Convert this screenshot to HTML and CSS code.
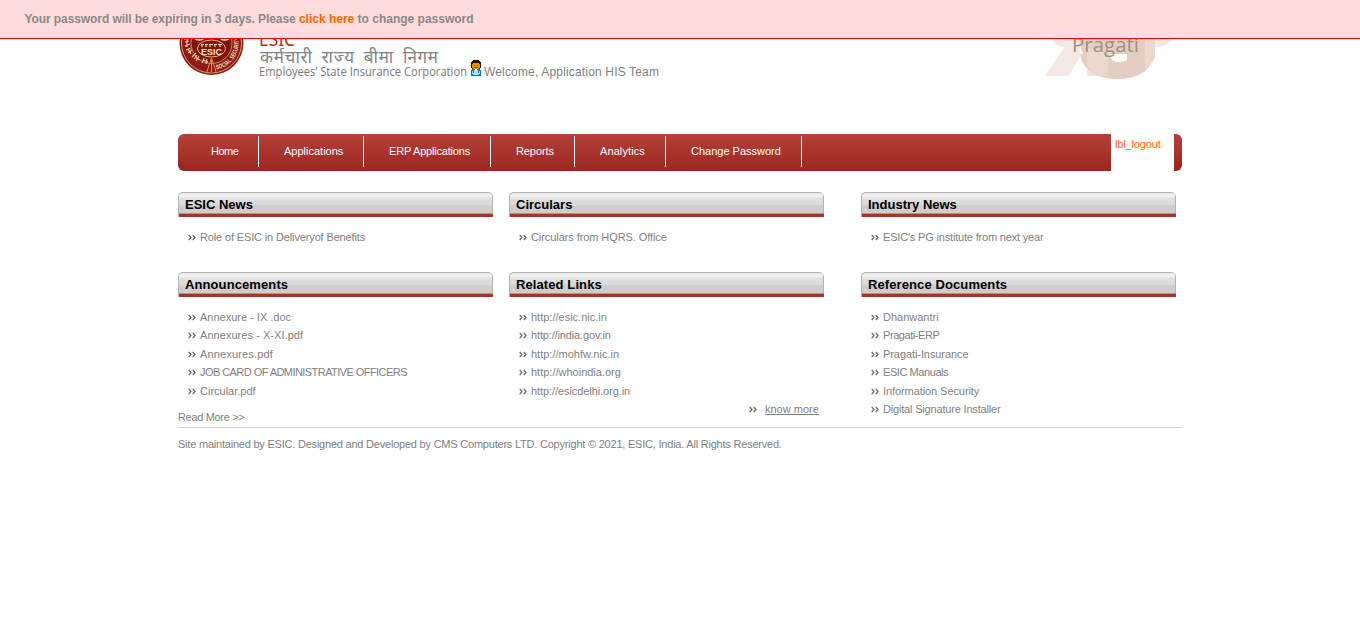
FILE: index.html
```html
<!DOCTYPE html>
<html lang="en">
<head>
<meta charset="utf-8">
<title>ESIC</title>
<link rel="stylesheet" href="styles.css">
</head>
<body>
<svg class="defs" width="0" height="0">
  <symbol id="arrows" viewBox="0 0 8 7"><path d="M0.7 0.8l2.3 2.7-2.3 2.7M4.7 0.8l2.3 2.7-2.3 2.7" fill="none" stroke="#666" stroke-width="1.3"/></symbol>
</svg>
<div class="notice"><span class="lead">Your password will be expiring in 3 days. Please </span><a class="hot" href="#">click here</a> to change password</div>
<div class="page">
  <header class="header">
    <svg class="seal" width="66" height="66" viewBox="0 0 66 66">
      <circle cx="32.5" cy="33" r="32" fill="#8d1a17"/>
      <circle cx="32.5" cy="33" r="30" fill="none" stroke="#d9a05a" stroke-width="1"/>
      <circle cx="32.5" cy="33" r="20.5" fill="#7c1512" stroke="#c88c4c" stroke-width="1"/>
      <path d="M15 29q4 3 9 1 4-4 9-4t9 4q5 2 9-1l-3-6H18z" fill="#fdf3c0"/>
      <ellipse cx="32.5" cy="38.5" rx="14" ry="8.5" fill="#84140f" stroke="#e4b877" stroke-width="1"/>
      <path d="M22 34.5h3m1 0h3m1 0h4m1 0h3m1 0h4M23 34v3m4-3v3m4-3v3m5-3v3m5-3v3" stroke="#f3d9b0" stroke-width="1.2"/>
      <text class="seal-name" x="22" y="45" textLength="21" lengthAdjust="spacingAndGlyphs">ESIC</text>
      <path d="M32.5 48l-5 15M32.5 48l5 15M32.5 50v12" stroke="#d99645" stroke-width="1" fill="none"/>
      <path id="arc" d="M37.5 59.5A27 27 0 0 0 59 27" fill="none"/>
      <text class="seal-ring"><textPath href="#arc" textLength="43" lengthAdjust="spacingAndGlyphs">SOCIAL SECURITY</textPath></text>
      <path d="M5 29h5m-4 3l4-1m-4 5l5-2m-3-4v7m-1 3l5-2m-3 5l4-3m-4-1l3 5m1 3l4-4m-2 6l3-4m-1 6l3-5m-4 1l5 3m2 3l2-5m2 6l1-5m-4 1l5 2" fill="none" stroke="#f1d0a8" stroke-width="1.1"/>
    </svg>
    <svg class="brand" width="212" height="58" viewBox="0 0 212 58">
      <text class="brand-short" x="1" y="22" textLength="36" lengthAdjust="spacingAndGlyphs">ESIC</text>
      <text class="brand-hindi" x="2" y="39" textLength="178" lengthAdjust="spacing">कर्मचारी राज्य बीमा निगम</text>
      <text class="brand-full" x="1" y="52" textLength="208" lengthAdjust="spacingAndGlyphs">Employees’ State Insurance Corporation</text>
    </svg>
    <svg class="user" width="10" height="16" viewBox="0 0 10 16" shape-rendering="crispEdges">
      <path d="M2 0h6v1h1v1h1v6H9v1H1V8H0V2h1V1h1z" fill="#21140a"/>
      <path d="M1 4h1V3h6v1h1v4H8v1H2V8H1z" fill="#d99a0e"/>
      <path d="M3 5h1v1H3zm3 0h1v1H6zM3 7h4v1H3z" fill="#8c5a05"/>
      <path d="M1 9h8v1h1v6H0v-6h1z" fill="#0872d2"/>
      <path d="M1 11h1v3H1zm7 0h1v3H8zM3 10h4v3H3zM2 13h6v2H2z" fill="#a8e2ff"/>
      <path d="M4 9h2v2H4z" fill="#fff"/>
    </svg>
    <span class="welcome">Welcome, Application HIS Team</span>
    <svg class="pragati" width="134" height="50" viewBox="0 0 134 50">
      <path d="M6 0h30v27L26 44q-1 2-3 2H2q-1 0 0-2l19-27Q11 18 7 8z" fill="#f3e8e4"/>
      <path d="M43 20h22v26H45q-2 0-2-2z" fill="#f0e2dc"/>
      <path d="M101 0h32q-2 14-19 17l-3 0v10H101z" fill="#f3e8e4"/>
      <path d="M34 0h67v20H83V0v17q3 12-8 14-9-1-10-8-20-2-24 5-5-8-7-28z" fill="#e4cec2"/>
      <path d="M36 24q2 14 16 21 10 4 22 4 27 0 35-19H83q-3 2-9 2-7-1-9-8z" fill="#e4cec2"/>
      <path d="M43 19h21v27H54q-9-5-11-11z" fill="#ead8ce"/>
      <path d="M101 8h10v20l-10 13z" fill="#ead8ce"/>
      <path d="M83 17h18v14H83z" fill="#e4cec2"/>
      <path d="M66 24h17v3q-3 5-9 5t-8-8z" fill="#fff"/>
      <text class="pragati-name" x="28" y="21.5" textLength="67" lengthAdjust="spacingAndGlyphs">Pragati</text>
    </svg>
  </header>
  <nav class="nav">
    <a class="tab home" href="#">Home</a><a class="tab apps" href="#">Applications</a><a class="tab erp" href="#">ERP Applications</a><a class="tab reports" href="#">Reports</a><a class="tab analytics" href="#">Analytics</a><a class="tab change" href="#">Change Password</a>
    <div class="logout"><a href="#">lbl_logout</a></div>
  </nav>
  <main class="grid">
    <section class="panel">
      <h2 class="title">ESIC News</h2>
      <ul class="list">
        <li><svg class="arr"><use href="#arrows"/></svg><a class="t2">Role of ESIC in Deliveryof Benefits</a></li>
      </ul>
    </section>
    <section class="panel">
      <h2 class="title">Circulars</h2>
      <ul class="list">
        <li><svg class="arr"><use href="#arrows"/></svg><a class="t1">Circulars from HQRS. Office</a></li>
      </ul>
    </section>
    <section class="panel">
      <h2 class="title">Industry News</h2>
      <ul class="list">
        <li><svg class="arr"><use href="#arrows"/></svg><a class="t3">ESIC's PG institute from next year</a></li>
      </ul>
    </section>
    <section class="panel">
      <h2 class="title wide">Announcements</h2>
      <ul class="list">
        <li><svg class="arr"><use href="#arrows"/></svg><a>Annexure - IX .doc</a></li>
        <li><svg class="arr"><use href="#arrows"/></svg><a class="w1">Annexures - X-XI.pdf</a></li>
        <li><svg class="arr"><use href="#arrows"/></svg><a class="w2">Annexures.pdf</a></li>
        <li><svg class="arr"><use href="#arrows"/></svg><a class="t5">JOB CARD OF ADMINISTRATIVE OFFICERS</a></li>
        <li><svg class="arr"><use href="#arrows"/></svg><a>Circular.pdf</a></li>
      </ul>
      <a class="read">Read More &gt;&gt;</a>
    </section>
    <section class="panel">
      <h2 class="title wide">Related Links</h2>
      <ul class="list">
        <li><svg class="arr"><use href="#arrows"/></svg><a>http://esic.nic.in</a></li>
        <li><svg class="arr"><use href="#arrows"/></svg><a class="t2">http://india.gov.in</a></li>
        <li><svg class="arr"><use href="#arrows"/></svg><a>http://mohfw.nic.in</a></li>
        <li><svg class="arr"><use href="#arrows"/></svg><a>http://whoindia.org</a></li>
        <li><svg class="arr"><use href="#arrows"/></svg><a class="t1">http://esicdelhi.org.in</a></li>
        <li class="more"><svg class="arr"><use href="#arrows"/></svg><a>know more</a></li>
      </ul>
    </section>
    <section class="panel">
      <h2 class="title wide">Reference Documents</h2>
      <ul class="list">
        <li><svg class="arr"><use href="#arrows"/></svg><a>Dhanwantri</a></li>
        <li><svg class="arr"><use href="#arrows"/></svg><a class="t4">Pragati-ERP</a></li>
        <li><svg class="arr"><use href="#arrows"/></svg><a class="t1">Pragati-Insurance</a></li>
        <li><svg class="arr"><use href="#arrows"/></svg><a class="t4">ESIC Manuals</a></li>
        <li><svg class="arr"><use href="#arrows"/></svg><a class="t1">Information Security</a></li>
        <li><svg class="arr"><use href="#arrows"/></svg><a class="t3">Digital Signature Installer</a></li>
      </ul>
    </section>
  </main>
  <footer class="footer">Site maintained by ESIC. Designed and Developed by CMS Computers LTD. Copyright © 2021, ESIC, India. All Rights Reserved.</footer>
</div>
</body>
</html>
```
FILE: styles.css
```css
* { box-sizing: border-box; }
body {
  margin: 0;
  background: #fff;
  color: #808080;
  font: 11px/14px "Liberation Sans", Arial, sans-serif;
}
a { color: inherit; text-decoration: none; }
.defs { display: block; }
.notice {
  position: fixed;
  inset: 0 0 auto;
  z-index: 5;
  height: 39px;
  padding: 0 24.5px;
  background: #ffdcdc;
  border-bottom: 1px solid #f00;
  color: #888;
  font-size: 12px;
  font-weight: bold;
  line-height: 38px;
}
.notice .lead { letter-spacing: -0.085px; }
.notice .hot { color: #f60; }
.page { width: 1004px; margin: 0 auto; }
.header {
  display: flex;
  align-items: flex-start;
  height: 134px;
}
.seal { margin: 10px 0 0 1px; flex: none; }
.brand { margin: 24px 0 0 13px; flex: none; overflow: visible; }
.seal-name { font: bold 8.5px "Liberation Sans", sans-serif; fill: #f8e3bd; }
.seal-ring { font: bold 6.5px "Liberation Sans", sans-serif; fill: #f3d9b8; }
.brand-short { font: 19px "Noto Sans", sans-serif; fill: #b5302c; }
.brand-hindi { font: 17px "Noto Sans Devanagari", "Noto Sans", sans-serif; word-spacing: 4px; fill: #808285; }
.brand-full { font: 12px "Open Sans", "Noto Sans", sans-serif; fill: #77797c; }
.user { margin: 60px 0 0 1px; flex: none; }
.welcome { margin: 65px 0 0 3px; font-size: 12px; line-height: 15px; letter-spacing: 0.165px; }
.pragati { margin: 30px 4px 0 auto; flex: none; }
.pragati-name { font: 20px "Open Sans", sans-serif; fill: #a09080; }
.nav {
  display: flex;
  height: 37px;
  padding: 2px 8px 0;
  border-radius: 6px;
  background: linear-gradient(#b44239, #9b2621);
}
.tab {
  height: 31px;
  padding-left: 25px;
  border-right: 1px solid #fff;
  color: #fff;
  line-height: 31px;
}
.home { width: 73px; letter-spacing: -0.5px; }
.apps { width: 105px; }
.erp { width: 127px; letter-spacing: -0.2px; }
.reports { width: 84px; letter-spacing: -0.1px; }
.analytics { width: 91px; letter-spacing: 0.1px; }
.change { width: 136px; }
.logout {
  width: 63px;
  height: 37px;
  margin: -2px 0 0 auto;
  padding: 3px 4px 0;
  background: #fff;
  color: #f60;
  letter-spacing: -0.15px;
}
.grid {
  display: grid;
  grid-template-columns: 315px 336px 315px;
  grid-template-rows: 80px 155px;
  column-gap: 16px;
  padding-top: 21px;
  border-bottom: 1px solid #d3d3d3;
}
.title {
  width: 315px;
  height: 25px;
  margin: 0;
  padding-left: 6px;
  border: solid #b4b4b4;
  border-width: 1px 0 0 1px;
  border-radius: 5px 5px 0 0;
  background:
    linear-gradient(#b4b4b4, #b4b4b4) 100% 0 / 1px 20px no-repeat,
    linear-gradient(#b39a62, #b39a62) 0 20px / 100% 1px no-repeat,
    linear-gradient(#a8332c, #a8332c) 0 21px / 100% 3px no-repeat,
    linear-gradient(#e8e8e8 0, #f3f3f3 3px, #dedede 6px, #d9d9d9 12px, #cdcbcd 13px, #d0ced0 20px);
  color: #000;
  font-size: 13px;
  line-height: 24px;
}
.title.wide { letter-spacing: 0.1px; }
.list {
  margin: 0;
  padding: 10.6px 0 0 10px;
  list-style: none;
}
.list li {
  display: flex;
  align-items: center;
  height: 18.45px;
}
.arr { width: 8px; height: 7px; margin: 1px 4px 0 0; flex: none; }
.t1 { letter-spacing: -0.08px; }
.t2 { letter-spacing: -0.14px; }
.t3 { letter-spacing: -0.18px; }
.t4 { letter-spacing: -0.43px; }
.t5 { letter-spacing: -0.56px; }
.w1 { letter-spacing: 0.05px; }
.w2 { letter-spacing: 0.15px; }
.list .more { padding-left: 230px; }
.more .arr { margin-right: 8px; }
.more a { text-decoration: underline; }
.read { display: block; margin-top: 10px; letter-spacing: -0.33px; }
.footer { padding-top: 9px; letter-spacing: -0.215px; }
```
